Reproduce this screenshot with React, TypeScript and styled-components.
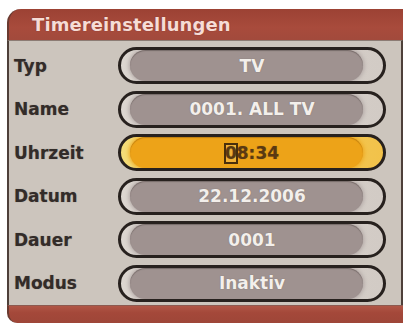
import React from 'react';
import styled, { createGlobalStyle } from 'styled-components';

const GlobalStyle = createGlobalStyle`
  html, body {
    margin: 0;
    padding: 0;
    background: #ffffff;
  }
  body {
    font-family: "DejaVu Sans", "Liberation Sans", sans-serif;
  }
`;

const Page = styled.div`
  width: 407px;
  height: 326px;
  padding: 9px 0 0 7px;
  box-sizing: border-box;
`;

const Panel = styled.div`
  width: 396px;
  display: flex;
  flex-direction: column;
`;

const Header = styled.div`
  height: 31px;
  display: flex;
  align-items: center;
  padding-left: 23px;
  background: linear-gradient(to bottom, #9c4234 0%, #a84b3c 60%, #a24a3c 100%);
  border-top-left-radius: 14px;
  border-left: 2px solid #6a3a30;
  box-sizing: border-box;
`;

const Title = styled.h1`
  margin: 0;
  font-size: 18px;
  font-weight: bold;
  color: #f6dcd6;
  letter-spacing: 0.1px;
  text-shadow: 0 0 1px rgba(90, 30, 20, 0.6);
`;

const Body = styled.div`
  display: flex;
  flex-direction: column;
  gap: 6.6px;
  padding: 6px 0 3px;
  background: #ccc5bd;
  border-top: 1px solid #8c7c74;
  border-left: 2px solid #4e403a;
  border-right: 2px solid #4e403a;
`;

const Row = styled.div`
  height: 37px;
  display: flex;
  align-items: center;
`;

const Label = styled.span`
  width: 109px;
  padding-left: 5px;
  box-sizing: border-box;
  font-size: 17px;
  font-weight: bold;
  color: #332c29;
  text-shadow: 0 0 1px rgba(40, 30, 28, 0.4);
`;

const Pill = styled.div<{ $active?: boolean }>`
  width: 268px;
  height: 37px;
  box-sizing: border-box;
  border: 3px solid #27211e;
  border-radius: 19px;
  display: flex;
  background: ${p =>
    p.$active
      ? 'linear-gradient(to right, #f4dc78, #f2c24a)'
      : 'linear-gradient(to right, #dcd6d0, #d2cbc5)'};
  overflow: hidden;
`;

const Fill = styled.div<{ $active?: boolean }>`
  flex: 1;
  margin: 0 20px 0 9px;
  border-radius: 16px;
  display: flex;
  align-items: center;
  justify-content: center;
  background: ${p => (p.$active ? '#eda318' : '#9f9290')};
  box-shadow: ${p =>
    p.$active
      ? 'inset 0 1px 1px rgba(120, 70, 0, 0.4), 0 0 4px 1px #eda318'
      : 'inset 0 1px 1px rgba(60, 50, 48, 0.4), 0 0 4px 1px #ada2a0'};
`;

const Value = styled.span<{ $active?: boolean }>`
  margin-right: -11px;
  font-size: 17px;
  font-weight: bold;
  color: ${p => (p.$active ? '#5a3912' : '#f3efeb')};
  text-shadow: ${p =>
    p.$active ? '0 0 1px rgba(90, 57, 18, 0.5)' : '0 0 1px rgba(80, 70, 68, 0.6)'};
`;

const Cursor = styled.span`
  display: inline-block;
  outline: 2px solid #4a2f0c;
  outline-offset: -1px;
  background: #f2b238;
  line-height: 1;
  padding: 1px 0;
`;

const Band = styled.div`
  height: 18px;
  background: linear-gradient(to bottom, #b05646 0%, #a4483a 40%, #9e4638 100%);
  border-bottom-left-radius: 10px;
  border-left: 2px solid #6a3a30;
  border-top: 1px solid #8c5a50;
  box-sizing: border-box;
`;

type Field = { label: string; value: string; active?: boolean };

const fields: Field[] = [
  { label: 'Typ', value: 'TV' },
  { label: 'Name', value: '0001. ALL TV' },
  { label: 'Uhrzeit', value: '08:34', active: true },
  { label: 'Datum', value: '22.12.2006' },
  { label: 'Dauer', value: '0001' },
  { label: 'Modus', value: 'Inaktiv' },
];

const App = () => (
  <>
    <GlobalStyle />
    <Page>
      <Panel>
        <Header>
          <Title>Timereinstellungen</Title>
        </Header>
        <Body>
          {fields.map(f => (
            <Row key={f.label}>
              <Label>{f.label}</Label>
              <Pill $active={f.active}>
                <Fill $active={f.active}>
                  <Value $active={f.active}>
                    {f.active ? (
                      <>
                        <Cursor>{f.value[0]}</Cursor>
                        {f.value.slice(1)}
                      </>
                    ) : (
                      f.value
                    )}
                  </Value>
                </Fill>
              </Pill>
            </Row>
          ))}
        </Body>
        <Band />
      </Panel>
    </Page>
  </>
);

export default App;
